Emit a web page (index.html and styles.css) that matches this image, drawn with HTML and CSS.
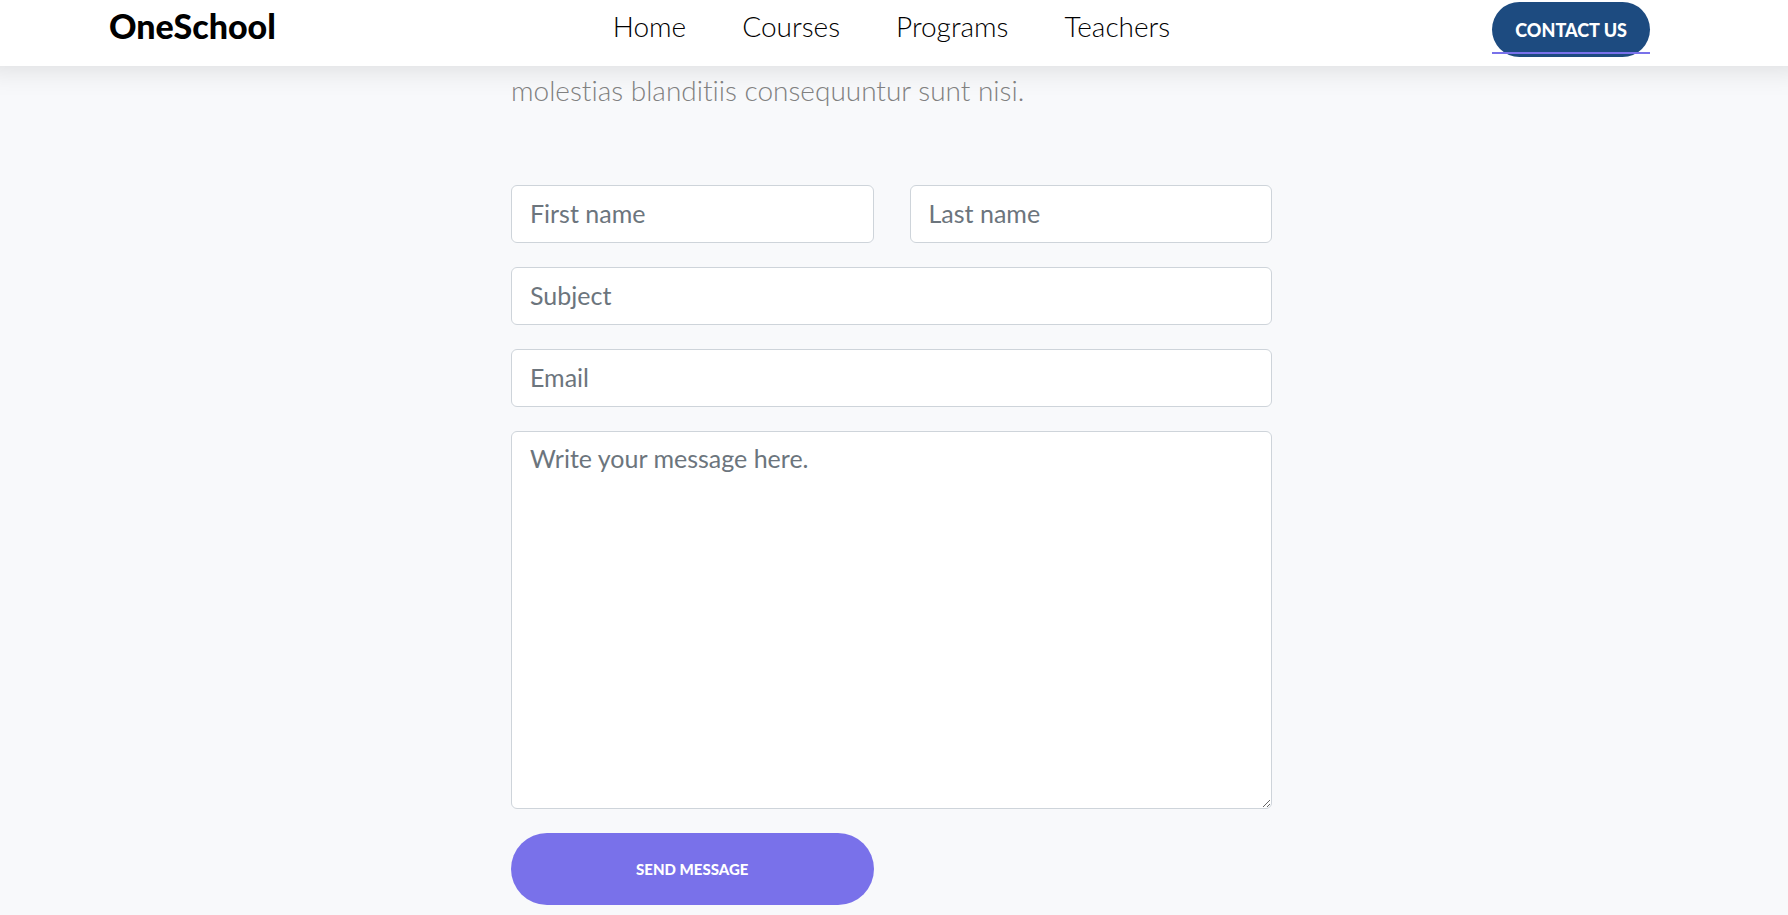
FILE: index.html
```html
<!DOCTYPE html>
<html lang="en">
<head>
<meta charset="utf-8">
<meta name="viewport" content="width=device-width, initial-scale=1">
<title>OneSchool</title>
<link rel="stylesheet" href="styles.css">
</head>
<body>
<header class="site-header">
  <a class="logo" href="#">OneSchool</a>
  <nav class="nav" aria-label="Main">
    <a href="#">Home</a>
    <a href="#">Courses</a>
    <a href="#">Programs</a>
    <a href="#">Teachers</a>
  </nav>
  <div class="cta"><a class="contact" href="#">Contact Us</a></div>
</header>
<main class="content">
  <p class="intro">molestias blanditiis consequuntur sunt nisi.</p>
  <form class="form">
    <input class="field" type="text" placeholder="First name" aria-label="First name">
    <input class="field" type="text" placeholder="Last name" aria-label="Last name">
    <input class="field wide" type="text" placeholder="Subject" aria-label="Subject">
    <input class="field wide" type="email" placeholder="Email" aria-label="Email">
    <textarea class="field wide message" placeholder="Write your message here." aria-label="Message"></textarea>
    <button class="send" type="button">Send Message</button>
  </form>
</main>
</body>
</html>
```
FILE: styles.css
```css
* {
  box-sizing: border-box;
}

body {
  margin: 0;
  background: #f8f9fb;
  font-family: Lato, "Open Sans", sans-serif;
  font-size: 28px;
  font-variant-ligatures: none;
}

a {
  color: #000;
  text-decoration: none;
}

.site-header {
  display: grid;
  grid-template-columns: 1fr auto 1fr;
  align-items: start;
  height: 66px;
  padding: 0 138px 0 109px;
  background: #fff;
  box-shadow: 0 -20px 30px 20px rgba(0, 0, 0, 0.14);
}

.logo {
  font-size: 34px;
  font-weight: 900;
  line-height: 52px;
}

.nav {
  display: flex;
  gap: 56px;
  padding-left: 24px;
  font-weight: 300;
  line-height: 52px;
}

.cta {
  display: flex;
  justify-content: flex-end;
  padding-top: 2px;
}

.contact {
  position: relative;
  padding: 1px 23px 0;
  border-radius: 28px;
  background: #1d4b80;
  color: #fff;
  font-size: 18px;
  font-weight: 900;
  line-height: 54px;
  text-transform: uppercase;
}

.contact::after {
  content: "";
  position: absolute;
  right: 0;
  bottom: 3px;
  left: 0;
  height: 2px;
  background: #7971ea;
}

.content {
  display: grid;
  grid-template-columns: minmax(0, 761px);
  justify-content: center;
  padding-right: 5px;
}

.intro {
  margin: 0;
  padding-bottom: 71px;
  color: #808080;
  font-weight: 300;
  line-height: 48px;
}

.form {
  display: grid;
  grid-template-columns: 1fr 1fr;
  gap: 24px 36px;
}

.field {
  width: 100%;
  min-width: 0;
  height: 58px;
  padding: 0 18px 2px;
  border: 1px solid #ced4da;
  border-radius: 6px;
  background: #fff;
  color: #495057;
  font: inherit;
  font-size: 25px;
}

.field::placeholder {
  color: #6c757d;
  opacity: 1;
}

.wide {
  grid-column: 1 / -1;
}

.message {
  display: block;
  height: 378px;
  padding: 8px 18px;
  line-height: 36px;
  resize: vertical;
}

.send {
  height: 72px;
  border: 0;
  border-radius: 36px;
  background: #7971ea;
  color: #fff;
  font: inherit;
  font-size: 15px;
  font-weight: 900;
  text-transform: uppercase;
}
```
